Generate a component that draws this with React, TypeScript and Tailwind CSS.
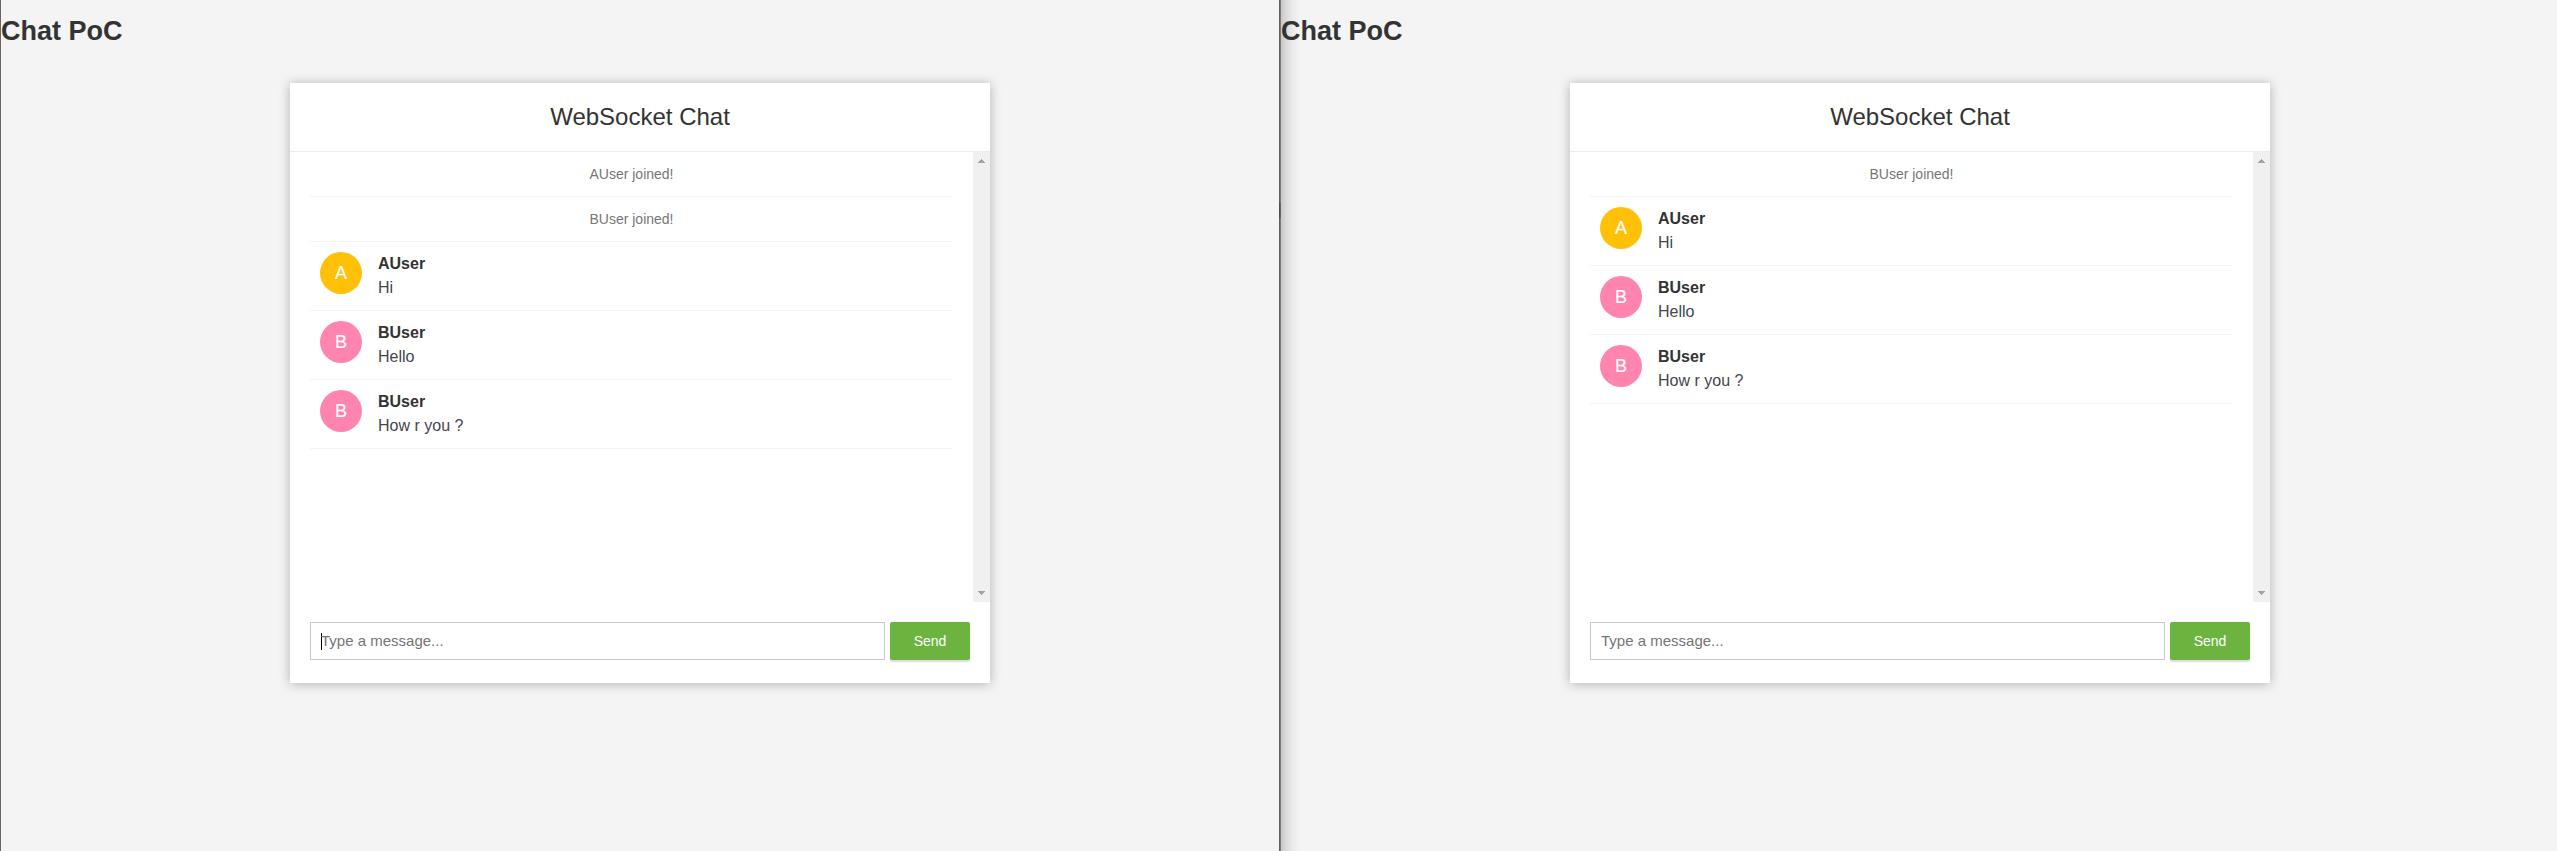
import React from "react";

type Entry =
  | { kind: "event"; text: string }
  | { kind: "chat"; user: string; text: string };

const chat: Entry[] = [
  { kind: "chat", user: "AUser", text: "Hi" },
  { kind: "chat", user: "BUser", text: "Hello" },
  { kind: "chat", user: "BUser", text: "How r you ?" },
];

const leftEntries: Entry[] = [
  { kind: "event", text: "AUser joined!" },
  { kind: "event", text: "BUser joined!" },
  ...chat,
];

const rightEntries: Entry[] = [{ kind: "event", text: "BUser joined!" }, ...chat];

const avatarColors: Record<string, string> = {
  A: "bg-[#ffc107]",
  B: "bg-[#ff85af]",
};

function Row({ entry }: { entry: Entry }) {
  if (entry.kind === "event") {
    return (
      <li className="border-b border-[#f4f4f4] py-[10px] text-center text-[14px] leading-6 text-[#777]">
        {entry.text}
      </li>
    );
  }
  const letter = entry.user[0];
  return (
    <li className="flex gap-4 border-b border-[#f4f4f4] p-[10px]">
      <i
        className={`h-[42px] w-[42px] shrink-0 rounded-full text-center text-[18px] leading-[42px] text-white not-italic [-webkit-text-stroke:0.15px_white] ${avatarColors[letter]}`}
      >
        {letter}
      </i>
      <div className="leading-6">
        <div className="font-bold text-[#333]">{entry.user}</div>
        <p className="text-[#43464b]">{entry.text}</p>
      </div>
    </li>
  );
}

function Scrollbar() {
  return (
    <div className="flex w-[17px] shrink-0 flex-col items-center justify-between bg-[#f0f0f0] py-[7px]">
      <svg width="7" height="4" viewBox="0 0 7 4" shapeRendering="crispEdges" fill="#a3a3a3">
        <path d="M3 0h1v1h1v1h1v1h1v1H0V3h1V2h1V1h1z" />
      </svg>
      <svg width="7" height="4" viewBox="0 0 7 4" shapeRendering="crispEdges" fill="#a3a3a3">
        <path d="M0 0h7v1H6v1H5v1H4v1H3V3H2V2H1V1H0z" />
      </svg>
    </div>
  );
}

function ChatWindow({ entries, focused }: { entries: Entry[]; focused?: boolean }) {
  return (
    <div className="w-[1278px] shrink-0">
      <h1 className="mt-[12px] h-[41px] text-[27px] leading-[38px] font-bold">Chat PoC</h1>
      <div className="mx-auto mt-[30px] flex h-[600px] w-[700px] flex-col bg-white shadow-[0_1px_11px_rgba(0,0,0,0.27)]">
        <div className="h-[69px] border-b border-[#ececec] text-center">
          <h2 className="text-[24px] leading-[68px]">WebSocket Chat</h2>
        </div>
        <div className="flex h-[450px]">
          <ul className="grow px-5">
            {entries.map((entry, i) => (
              <Row key={i} entry={entry} />
            ))}
          </ul>
          <Scrollbar />
        </div>
        <div className="flex gap-[5px] p-5">
          <div className="flex h-[38px] w-[575px] items-center border border-[#c8c8c8] px-[10px] text-[15px] text-[#757575]">
            {focused && <span className="-mr-px h-[17px] w-px bg-black" />}
            <span>Type a message...</span>
          </div>
          <button className="h-[38px] w-[80px] rounded-[2px] bg-[#6db33f] text-[14px] text-white shadow-[0_2px_2px_0_rgba(0,0,0,0.15)]">
            Send
          </button>
        </div>
      </div>
    </div>
  );
}

export default function App() {
  return (
    <div className="flex h-[851px] w-full overflow-hidden bg-[#f4f4f4] font-['Liberation_Sans',Arial,sans-serif] text-[16px] text-[#333]">
      <div className="w-px shrink-0 bg-[#666]" />
      <ChatWindow entries={leftEntries} focused />
      <div className="w-px shrink-0 bg-[#5f5f5f]">
        <div className="mt-[203px] h-[15px] bg-[#4c4c4c]" />
      </div>
      <div className="w-px shrink-0 bg-[#7c7c7c]">
        <div className="mt-[203px] h-[15px] bg-[#666]" />
      </div>
      <div className="flex min-w-0 grow overflow-hidden bg-[linear-gradient(to_right,#c8c8c8_0px,#dadada_5px,#ebebeb_12px,#f4f4f4_19px)]">
        <ChatWindow entries={rightEntries} />
      </div>
    </div>
  );
}
